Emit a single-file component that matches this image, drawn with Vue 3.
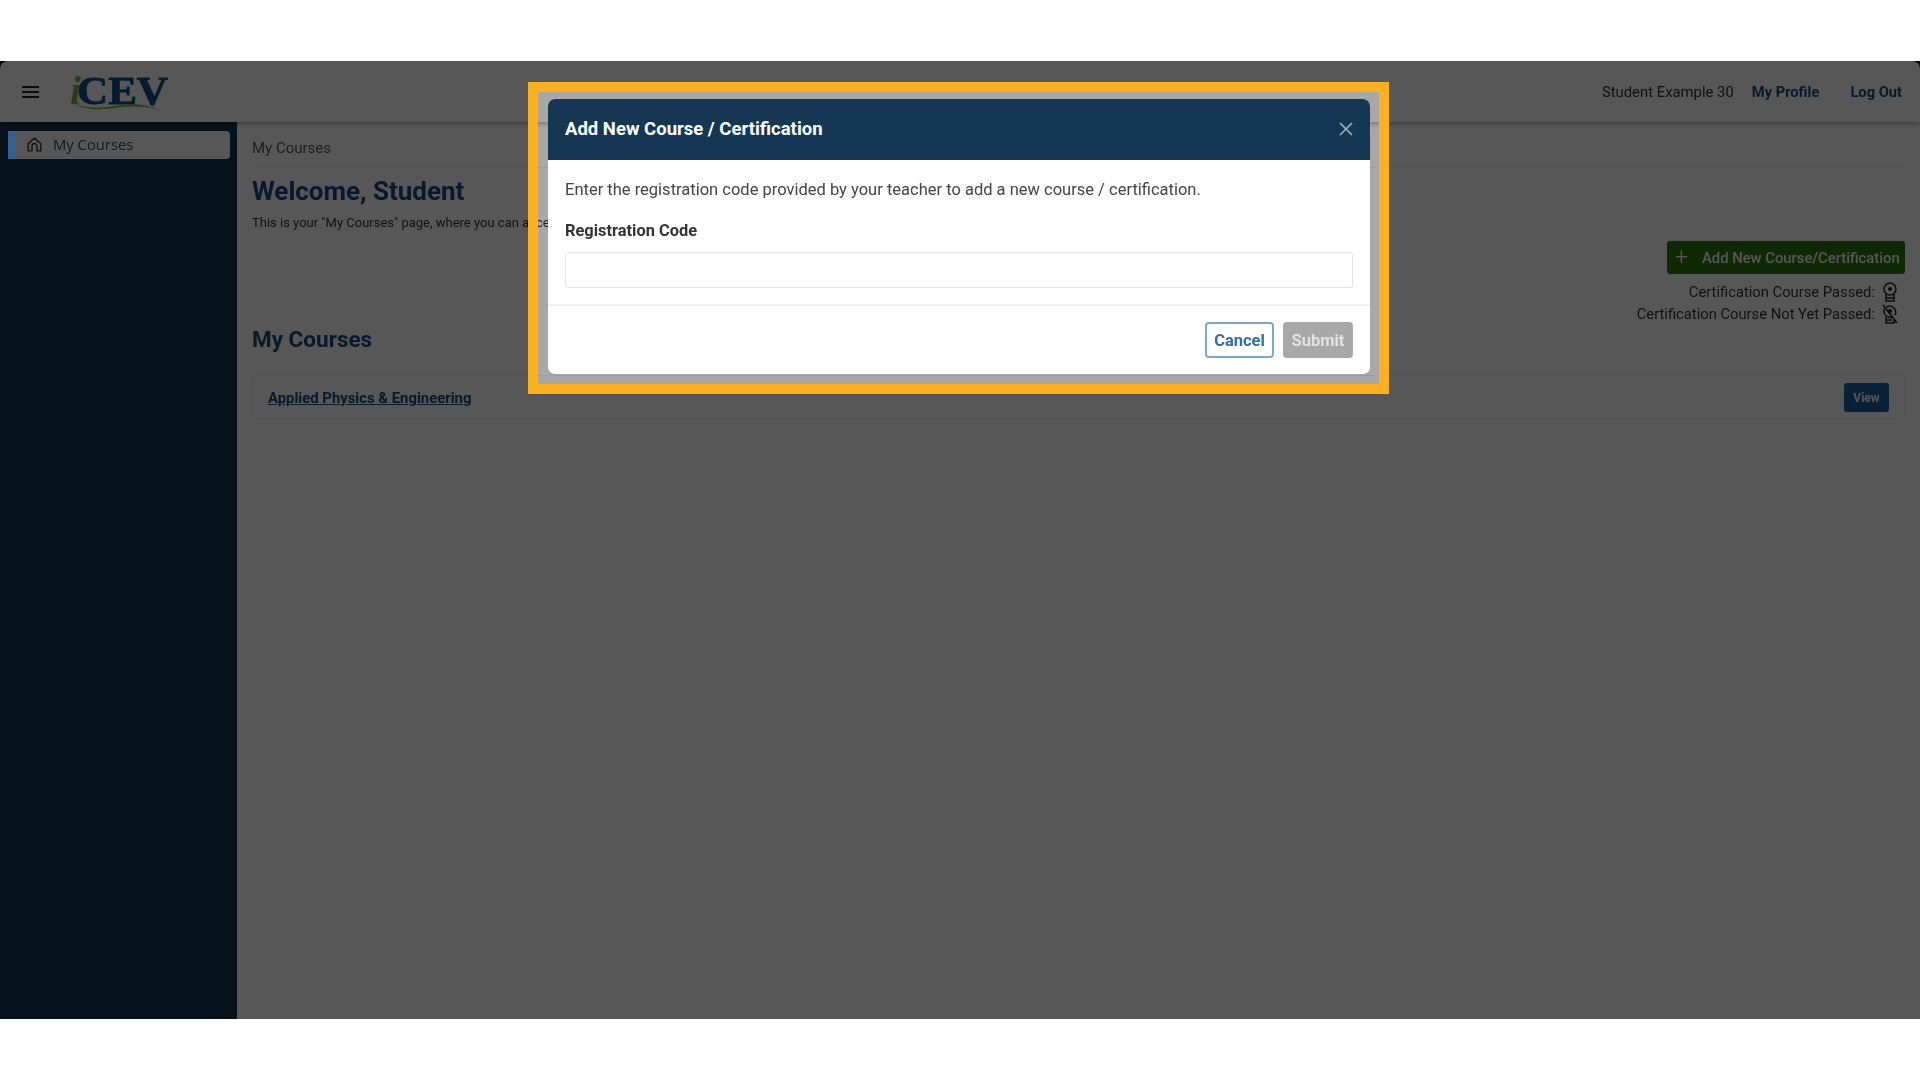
<template>
  <div class="frame">
    <div class="app">
      <header class="topbar">
        <button class="menu-btn" aria-label="Menu">
          <span></span><span></span><span></span>
        </button>
        <svg class="logo" viewBox="0 0 100 48" width="100" height="48">
          <text x="0" y="36" class="logo-i">i</text>
          <text x="7" y="36" class="logo-text" textLength="91" lengthAdjust="spacingAndGlyphs">CEV</text>
          <path d="M2 35 C20 42 34 40 48 37.500 C62 35 76 36 90 42 C76 38 62 38 48 39.500 C32 42.500 14 42 2 35 Z" fill="#7db548" />
        </svg>
        <div class="top-links">
          <span class="student">Student Example 30</span>
          <a class="top-link profile">My Profile</a>
          <a class="top-link">Log Out</a>
        </div>
      </header>

      <div class="below">
        <aside class="sidebar">
          <div class="nav-item">
            <svg class="home" viewBox="0 0 24 24" width="17" height="17" fill="none" stroke="#333" stroke-width="2" stroke-linejoin="round">
              <path d="M3 11 12 3l9 8v10h-5.500v-7a3.500 3.500 0 0 0-7 0v7H3z" />
            </svg>
            <span>My Courses</span>
          </div>
        </aside>

        <main class="content">
          <div class="crumb">My Courses</div>
          <div class="intro">
            <div>
              <h1>Welcome, Student</h1>
              <p class="lead">This is your "My Courses" page, where you can access your courses and certifications.</p>
            </div>
            <div class="actions">
              <button class="add-btn"><span class="plus">+</span>Add New Course/Certification</button>
              <div class="legend">
                Certification Course Passed:
                <svg viewBox="0 0 16 20" width="16" height="20" fill="none" stroke="#222" stroke-width="1.500">
                  <circle cx="8" cy="7" r="6" />
                  <circle cx="8" cy="7" r="2" fill="#222" stroke="none" />
                  <path d="M4 12v7h8v-7M4 16h8" />
                </svg>
              </div>
              <div class="legend">
                Certification Course Not Yet Passed:
                <svg viewBox="0 0 16 20" width="16" height="20" fill="none" stroke="#222" stroke-width="1.500">
                  <path d="M4 3.500A6 6 0 0 1 13 11M11 12.500A6 6 0 0 1 2.500 5" />
                  <circle cx="8" cy="7" r="2" fill="#222" stroke="none" />
                  <path d="M4 13v6h8v-4M4 16h6M1 1l14 18" />
                </svg>
              </div>
            </div>
          </div>

          <h2>My Courses</h2>
          <div class="course-row">
            <a class="course-link">Applied Physics &amp; Engineering</a>
            <button class="view-btn">View</button>
          </div>
        </main>
      </div>
    </div>

    <div class="nav-accent"></div>

    <div class="spotlight">
      <div class="modal">
        <div class="modal-head">
          <span class="modal-title">Add New Course / Certification</span>
          <svg class="close" viewBox="0 0 14 14" width="14" height="14" stroke="#a9b7c2" stroke-width="1.500">
            <path d="M1 1l12 12M13 1 1 13" />
          </svg>
        </div>
        <div class="modal-body">
          <p>Enter the registration code provided by your teacher to add a new course / certification.</p>
          <label for="reg-code">Registration Code</label>
          <input id="reg-code" type="text" />
        </div>
        <div class="modal-foot">
          <button class="cancel">Cancel</button>
          <button class="submit" disabled>Submit</button>
        </div>
      </div>
    </div>
  </div>
</template>

<script setup>
</script>

<style>
html,
body {
  margin: 0;
  background: #fff;
}
</style>

<style scoped>
.frame {
  position: relative;
  margin: 61px 0;
  height: 958px;
  overflow: hidden;
  font-family: Roboto, "Liberation Sans", sans-serif;
  color: #333;
}
.app {
  height: 100%;
  display: flex;
  flex-direction: column;
  background: #111;
  filter: blur(0.6px);
}
.topbar {
  height: 61px;
  flex: none;
  display: flex;
  align-items: center;
  padding: 0 18px 0 22px;
  box-shadow: 0 2px 5px rgba(0, 0, 0, 0.3);
  position: relative;
  z-index: 1;
  background: #fff;
  border-radius: 8px 8px 0 0;
}
.menu-btn {
  width: 17px;
  display: flex;
  flex-direction: column;
  gap: 3px;
  padding: 0;
  border: 0;
  background: none;
}
.menu-btn span {
  height: 2px;
  background: #222;
}
.logo {
  margin-left: 31px;
}
.logo-i {
  font: italic 700 39px "Liberation Serif", serif;
  fill: #7db548;
}
.logo-text {
  font: 700 39px "Liberation Serif", serif;
  fill: #124f88;
  stroke: #124f88;
  stroke-width: 0.8px;
}
.top-links {
  margin-left: auto;
  display: flex;
  align-items: center;
  font-size: 14.700px;
}
.student {
  margin-right: 18px;
  font-size: 14.850px;
}
.top-link {
  font-weight: 700;
  color: #154a7c;
}
.profile {
  margin-right: 31px;
}
.below {
  flex: 1;
  display: flex;
  min-height: 0;
  background: #fff;
}
.sidebar {
  width: 237px;
  flex: none;
  background: #143750;
  padding: 9px 7px 0 8px;
  box-sizing: border-box;
}
.nav-item {
  height: 28px;
  box-sizing: border-box;
  border-left: 7px solid #3a7fc0;
  border-radius: 2px 4px 4px 2px;
  background: #fff;
  display: flex;
  align-items: center;
  padding: 0 0 2px 11px;
  gap: 10px;
  font: 14.800px/24px "Open Sans", sans-serif;
  color: #2b4b63;
}
.content {
  flex: 1;
  padding: 0 15px;
  min-width: 0;
}
.crumb {
  height: 46px;
  line-height: 53px;
  font-size: 15px;
  color: #555;
  border-bottom: 1px solid #eee;
  box-sizing: border-box;
}
.intro {
  display: flex;
  justify-content: space-between;
  height: 156px;
}
h1 {
  margin: 7px 0 0;
  font-size: 26px;
  line-height: 32px;
  color: #154a7c;
}
.lead {
  margin: 8px 0 0;
  font-size: 13px;
  line-height: 16px;
}
.actions {
  padding-top: 73px;
  display: flex;
  flex-direction: column;
  align-items: flex-end;
  font-size: 14.750px;
}
.add-btn {
  flex: none;
  width: 238px;
  height: 33px;
  display: flex;
  align-items: center;
  padding: 0 0 0 7px;
  border: 0;
  border-radius: 3px;
  background: #2a7a0c;
  color: #fff;
  font: 500 14.800px Roboto, sans-serif;
  white-space: nowrap;
}
.plus {
  font-size: 23px;
  font-weight: 300;
  width: 27px;
  text-align: left;
  padding-left: 1px;
}
.legend {
  flex: none;
  display: flex;
  align-items: center;
  justify-content: flex-end;
  gap: 7px;
  height: 22px;
  padding-right: 7px;
}
.legend:nth-child(2) {
  margin-top: 7px;
}
h2 {
  margin: 0;
  font-size: 22.500px;
  line-height: 30px;
  color: #154a7c;
}
.course-row {
  margin-top: 21px;
  height: 45px;
  box-sizing: border-box;
  border: 1px solid #eee;
  border-radius: 4px;
  display: flex;
  align-items: center;
  justify-content: space-between;
  padding: 0 15px 0 15px;
}
.course-link {
  font-size: 14.850px;
  font-weight: 700;
  color: #154a7c;
  text-decoration: underline;
}
.view-btn {
  width: 45px;
  height: 29px;
  border: 0;
  border-radius: 3px;
  background: #17609e;
  color: #fff;
  font: 700 12px Roboto, sans-serif;
  padding: 0;
}
.nav-accent {
  position: absolute;
  z-index: 2;
  left: 8px;
  top: 70px;
  width: 7px;
  height: 28px;
  background: #33608c;
  filter: blur(0.6px);
}
.spotlight {
  position: absolute;
  left: 528px;
  top: 21px;
  width: 861px;
  height: 312px;
  box-sizing: border-box;
  border: 10px solid #ffb020;
  padding: 7px 9px 10px 10px;
  background: rgba(0, 0, 0, 0.34);
  box-shadow: 0 0 0 2000px rgba(0, 0, 0, 0.66);
}
.modal {
  height: 100%;
  border-radius: 7px;
  overflow: hidden;
  background: #fff;
  display: flex;
  flex-direction: column;
  filter: blur(0.3px);
}
.modal-head {
  height: 61px;
  flex: none;
  box-sizing: border-box;
  background: #163753;
  color: #fff;
  display: flex;
  align-items: center;
  justify-content: space-between;
  padding: 0 16px 2px 17px;
}
.modal-title {
  font-size: 18.500px;
  font-weight: 700;
}
.close {
  margin-right: 1px;
}
.modal-body {
  padding: 20px 17px 0;
  height: 146px;
  box-sizing: border-box;
  border-bottom: 2px solid #f1f1f1;
  flex: none;
}
.modal-body p {
  margin: 0;
  font-size: 16.500px;
  line-height: 20px;
  color: #444;
}
.modal-body label {
  display: block;
  margin-top: 21px;
  font-size: 16.400px;
  line-height: 20px;
  font-weight: 700;
  color: #333;
}
.modal-body input {
  display: block;
  margin-top: 11px;
  width: 100%;
  height: 36px;
  box-sizing: border-box;
  border: 1px solid #e4e4e4;
  border-radius: 3px;
  outline: 0;
}
.modal-foot {
  flex: 1;
  display: flex;
  align-items: center;
  justify-content: flex-end;
  gap: 9px;
  padding: 0 17px;
}
.modal-foot button {
  height: 36px;
  border-radius: 4px;
  font: 700 16.500px Roboto, sans-serif;
  padding: 0;
}
.cancel {
  width: 69px;
  background: #fff;
  border: 2px solid #7ba6cf;
  color: #2f6ea8;
}
.submit {
  width: 70px;
  border: 0;
  background: #a8a8a8;
  color: #e2e2e2;
}
</style>
